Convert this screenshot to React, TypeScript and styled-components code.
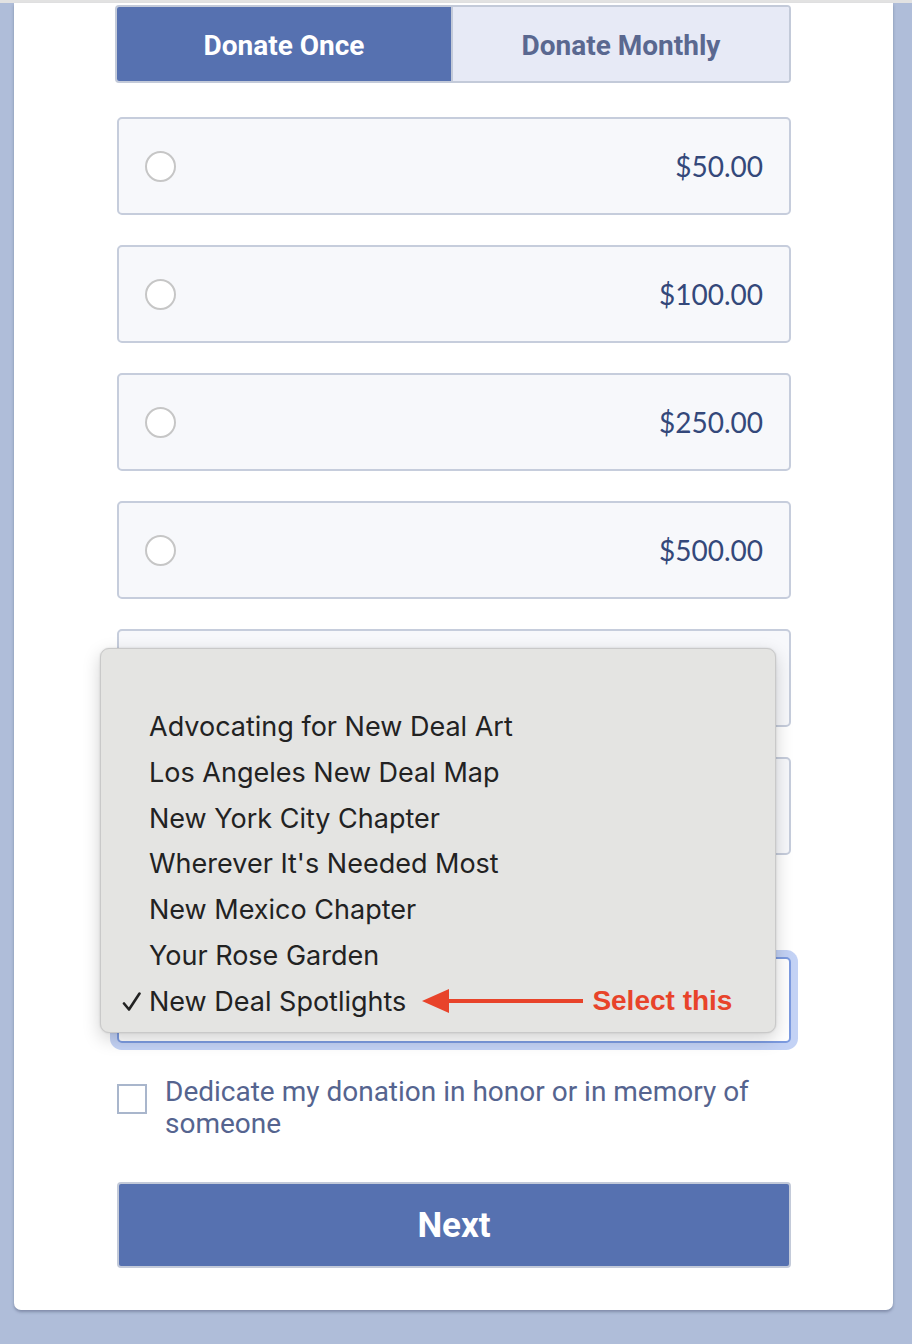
import React from "react";
import styled, { createGlobalStyle } from "styled-components";

const Global = createGlobalStyle`
  html, body { margin: 0; padding: 0; }
  body { background: #afbdd9; font-family: Roboto, "Liberation Sans", sans-serif; }
  * { box-sizing: border-box; }
`;

const Page = styled.div`
  min-height: 1344px;
  background: #afbdd9;
  display: flex;
  flex-direction: column;
`;

const TopStrip = styled.div`
  height: 3px;
  background: #e2e2e2;
`;

const Card = styled.div`
  width: 879px;
  margin-left: 14px;
  background: #ffffff;
  border-radius: 0 0 7px 7px;
  box-shadow: 0 2px 3px rgba(40, 50, 80, 0.35);
  padding: 2px 0 42px 103px;
`;

const Column = styled.div`
  position: relative;
  width: 674px;
  display: flex;
  flex-direction: column;
`;

const Tabs = styled.div`
  display: flex;
  width: 676px;
  height: 78px;
  margin-left: -2px;
  border: 2px solid #c3cad9;
  border-radius: 4px;
  overflow: hidden;
`;

const Tab = styled.div<{ $active?: boolean }>`
  flex: 0 0 ${(p) => (p.$active ? "336px" : "auto")};
  flex-grow: ${(p) => (p.$active ? 0 : 1)};
  display: flex;
  align-items: center;
  justify-content: center;
  padding-top: 3px;
  background: ${(p) => (p.$active ? "#5671b0" : "#e7eaf6")};
  color: ${(p) => (p.$active ? "#ffffff" : "#5a6890")};
  font-family: Roboto, "Liberation Sans", sans-serif;
  font-weight: 700;
  font-size: 28px;
  border-right: ${(p) => (p.$active ? "2px solid #c3cad9" : "none")};
`;

const Amounts = styled.div`
  display: flex;
  flex-direction: column;
  gap: 30px;
  margin-top: 34px;
`;

const AmountRow = styled.div`
  height: 98px;
  display: flex;
  align-items: center;
  justify-content: space-between;
  padding: 0 26px 0 26px;
  background: #f7f8fb;
  border: 2px solid #c6cddc;
  border-radius: 5px;
`;

const Radio = styled.span`
  width: 31px;
  height: 31px;
  border-radius: 50%;
  border: 2px solid #c6c6c6;
  background: #ffffff;
`;

const Amount = styled.span`
  font-family: Lato, "Liberation Sans", sans-serif;
  font-size: 28px;
  color: #34487a;
`;

const SelectBox = styled.div`
  margin-top: 102px;
  height: 86px;
  border: 2px solid #7c9be0;
  border-radius: 5px;
  background: #ffffff;
  box-shadow: 0 0 0 7px rgba(135, 165, 235, 0.5);
`;

const CheckRow = styled.div`
  display: flex;
  align-items: flex-start;
  gap: 18px;
  margin-top: 33px;
`;

const CheckBox = styled.span`
  flex: 0 0 30px;
  height: 30px;
  margin-top: 8px;
  border: 2px solid #a9b6cc;
  background: #ffffff;
`;

const CheckLabel = styled.span`
  font-family: Roboto, "Liberation Sans", sans-serif;
  font-size: 28px;
  line-height: 32px;
  color: #55648f;
`;

const NextButton = styled.div`
  margin-top: 42px;
  height: 86px;
  display: flex;
  align-items: center;
  justify-content: center;
  background: #5671b0;
  border: 2px solid #c3cad9;
  border-radius: 4px;
  color: #ffffff;
  font-family: Roboto, "Liberation Sans", sans-serif;
  font-weight: 700;
  font-size: 35px;
`;

const Menu = styled.div`
  position: absolute;
  left: -17px;
  top: 643px;
  width: 676px;
  height: 385px;
  padding: 9px 0 8px 20px;
  background: #e4e4e2;
  border: 1px solid #c9c9c9;
  border-radius: 9px;
  box-shadow: 0 6px 18px rgba(0, 0, 0, 0.18), 0 0 2px rgba(0, 0, 0, 0.15);
  display: flex;
  flex-direction: column;
`;

const MenuItem = styled.div`
  height: 46px;
  display: grid;
  grid-template-columns: 28px auto 1fr;
  align-items: center;
  font-family: Inter, "Noto Sans", sans-serif;
  font-size: 27px;
  color: #222222;
`;

const CheckIcon = styled.svg`
  display: block;
  margin-left: 1px;
  margin-top: 1px;
`;

const Annotation = styled.span`
  display: flex;
  align-items: center;
  margin-left: 16px;
  gap: 9px;
`;

const AnnotationText = styled.span`
  font-family: "Liberation Sans", Arial, sans-serif;
  font-weight: 700;
  font-size: 28px;
  color: #e8432a;
`;

const items = [
  "",
  "Advocating for New Deal Art",
  "Los Angeles New Deal Map",
  "New York City Chapter",
  "Wherever It's Needed Most",
  "New Mexico Chapter",
  "Your Rose Garden",
];

export default function App() {
  return (
    <Page>
      <Global />
      <TopStrip />
      <Card>
        <Column>
          <Tabs>
            <Tab $active>Donate Once</Tab>
            <Tab>Donate Monthly</Tab>
          </Tabs>
          <Amounts>
            {["$50.00", "$100.00", "$250.00", "$500.00", "", ""].map((a, i) => (
              <AmountRow key={i}>
                <Radio />
                <Amount>{a}</Amount>
              </AmountRow>
            ))}
          </Amounts>
          <SelectBox />
          <CheckRow>
            <CheckBox />
            <CheckLabel>Dedicate my donation in honor or in memory of someone</CheckLabel>
          </CheckRow>
          <NextButton>Next</NextButton>

          <Menu>
            {items.map((it, i) => (
              <MenuItem key={i}>
                <span />
                <span>{it}</span>
              </MenuItem>
            ))}
            <MenuItem>
              <CheckIcon width="20" height="20" viewBox="0 0 20 20">
                <path
                  d="M2 11.5 L7 17.5 L17.5 1.5"
                  fill="none"
                  stroke="#222222"
                  strokeWidth="2.6"
                  strokeLinecap="round"
                  strokeLinejoin="round"
                />
              </CheckIcon>
              <span>New Deal Spotlights</span>
              <Annotation>
                <svg width="161" height="26" viewBox="0 0 161 26">
                  <path d="M0 13 L27 1 L27 25 Z" fill="#e8432a" />
                  <rect x="25" y="11" width="136" height="4" fill="#e8432a" />
                </svg>
                <AnnotationText>Select this</AnnotationText>
              </Annotation>
            </MenuItem>
          </Menu>
        </Column>
      </Card>
    </Page>
  );
}
